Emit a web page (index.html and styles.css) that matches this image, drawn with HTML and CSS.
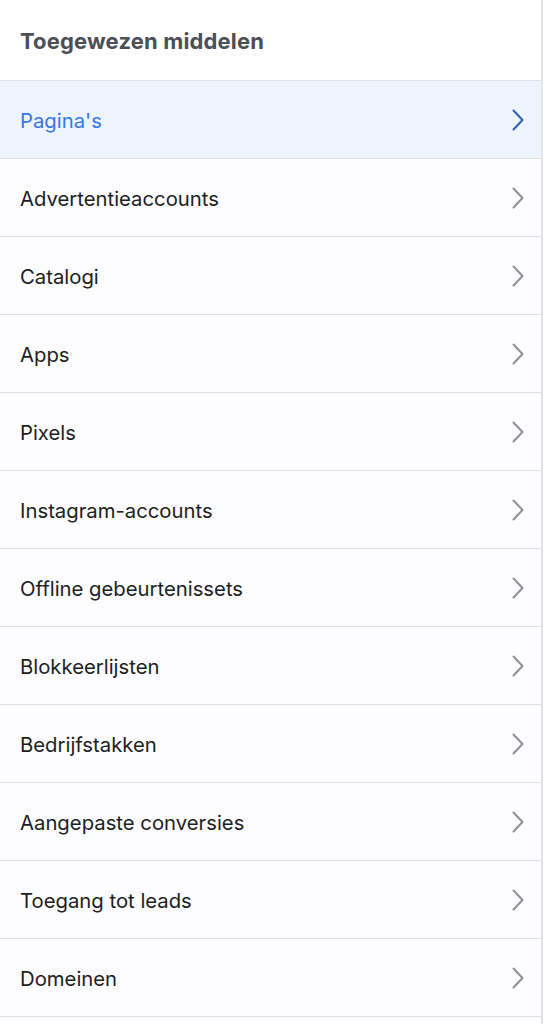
FILE: index.html
```html
<!DOCTYPE html>
<html lang="nl">
<head>
<meta charset="utf-8">
<title>Toegewezen middelen</title>
<link rel="stylesheet" href="styles.css">
</head>
<body>
<div class="panel">
  <div class="header">Toegewezen middelen</div>
  <ul class="list">
    <li class="item active"><span class="label">Pagina's</span><svg class="chev" viewBox="0 0 12 22"><path d="M1.5 1.5 L10.5 11 L1.5 20.5"/></svg></li>
    <li class="item"><span class="label">Advertentieaccounts</span><svg class="chev" viewBox="0 0 12 22"><path d="M1.5 1.5 L10.5 11 L1.5 20.5"/></svg></li>
    <li class="item"><span class="label">Catalogi</span><svg class="chev" viewBox="0 0 12 22"><path d="M1.5 1.5 L10.5 11 L1.5 20.5"/></svg></li>
    <li class="item"><span class="label">Apps</span><svg class="chev" viewBox="0 0 12 22"><path d="M1.5 1.5 L10.5 11 L1.5 20.5"/></svg></li>
    <li class="item"><span class="label">Pixels</span><svg class="chev" viewBox="0 0 12 22"><path d="M1.5 1.5 L10.5 11 L1.5 20.5"/></svg></li>
    <li class="item"><span class="label">Instagram-accounts</span><svg class="chev" viewBox="0 0 12 22"><path d="M1.5 1.5 L10.5 11 L1.5 20.5"/></svg></li>
    <li class="item"><span class="label">Offline gebeurtenissets</span><svg class="chev" viewBox="0 0 12 22"><path d="M1.5 1.5 L10.5 11 L1.5 20.5"/></svg></li>
    <li class="item"><span class="label">Blokkeerlijsten</span><svg class="chev" viewBox="0 0 12 22"><path d="M1.5 1.5 L10.5 11 L1.5 20.5"/></svg></li>
    <li class="item"><span class="label">Bedrijfstakken</span><svg class="chev" viewBox="0 0 12 22"><path d="M1.5 1.5 L10.5 11 L1.5 20.5"/></svg></li>
    <li class="item"><span class="label">Aangepaste conversies</span><svg class="chev" viewBox="0 0 12 22"><path d="M1.5 1.5 L10.5 11 L1.5 20.5"/></svg></li>
    <li class="item"><span class="label">Toegang tot leads</span><svg class="chev" viewBox="0 0 12 22"><path d="M1.5 1.5 L10.5 11 L1.5 20.5"/></svg></li>
    <li class="item"><span class="label">Domeinen</span><svg class="chev" viewBox="0 0 12 22"><path d="M1.5 1.5 L10.5 11 L1.5 20.5"/></svg></li>
  </ul>
</div>
</body>
</html>
```
FILE: styles.css
```css
html, body {
  margin: 0;
  padding: 0;
  background: #ffffff;
}
body {
  font-family: Inter, "Noto Sans", "Liberation Sans", sans-serif;
  color: #1c1e21;
}
.panel {
  width: 543px;
  height: 1024px;
  box-sizing: border-box;
  border-right: 2px solid #e4e4e6;
  background: #fdfcfe;
}
.header {
  height: 81px;
  box-sizing: border-box;
  padding: 1px 20px 0;
  display: flex;
  align-items: center;
  font-size: 22px;
  letter-spacing: 0.15px;
  font-weight: 700;
  color: #4b4f56;
  background: #ffffff;
  border-bottom: 1px solid #dddfe2;
}
.list {
  list-style: none;
  margin: 0;
  padding: 0;
}
.item {
  height: 77px;
  border-bottom: 1px solid #dddfe2;
  display: flex;
  align-items: center;
  justify-content: space-between;
  padding: 0 17px 0 20px;
  font-size: 20.3px;
}
.label {
  padding-top: 2px;
}
.item.active {
  background: #edf4fe;
  color: #3578e5;
}
.chev {
  width: 12px;
  height: 22px;
  fill: none;
  stroke: #8d9096;
  stroke-width: 2;
  stroke-linecap: round;
  stroke-linejoin: round;
}
.active .chev {
  stroke: #2d5fb8;
}
```
